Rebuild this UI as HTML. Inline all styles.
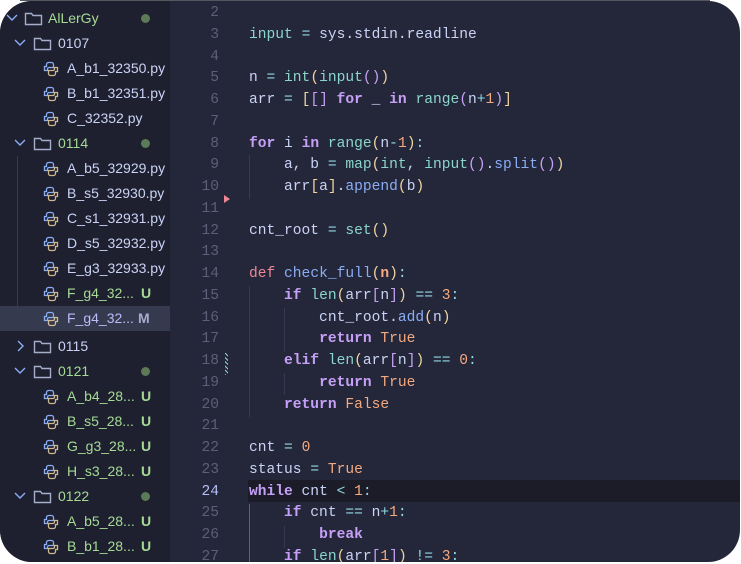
<!DOCTYPE html>
<html><head><meta charset="utf-8"><style>
*{margin:0;padding:0;box-sizing:border-box}
body{width:741px;height:564px;background:#fff;position:relative;overflow:hidden;font-family:"Liberation Sans",sans-serif}
.topline{position:absolute;left:20px;top:0;width:690px;height:1px;background:#55575f}
.card{position:absolute;left:0;top:1px;width:740px;height:561px;border-radius:32px;overflow:hidden;background:#24273a}
.side{position:absolute;left:0;top:0;width:170px;height:100%;background:#1e2030}
.row{position:absolute;left:0;width:170px;height:25px;font-size:14px;line-height:25px;color:#cad3f5}
.row.sel{background:#363a4f}
.row span.t{position:absolute;top:0}
.chev{position:absolute;top:7px}
.fold{position:absolute;top:5px}
.py{position:absolute;top:5px;left:43px}
.dot{position:absolute;left:141px;top:8px;width:9px;height:9px;border-radius:50%;background:#5b7a55}
.badge{position:absolute;left:141px;top:0;font-weight:bold;font-size:14px}
.g{color:#a6da95}
.guide{position:absolute;left:17px;width:1px;background:#363a4f}
.code{position:absolute;left:0;top:2px;width:100%;font-family:"Liberation Mono",monospace;font-size:14.6px}
.ln{position:absolute;left:170px;width:49px;text-align:right;color:#5b6078;height:21.76px;line-height:21.76px}
.ln.cur{color:#b7bdf8}
.cl{position:absolute;left:249px;white-space:pre;color:#cad3f5;height:21.76px;line-height:21.76px}
.hl{position:absolute;left:248px;width:500px;height:22px;background:#1b1c28}
.k{color:#c6a0f6;font-weight:bold}.f{color:#8aadf4}.b{color:#8bd5ca}.o{color:#91d7e3}.n{color:#f5a97f}.d{color:#ed8796}.p{color:#eed49f}.pp{color:#c6a0f6}.nb{color:#f5a97f;font-weight:bold}
.ig{position:absolute;width:1px;background:#363a4f}
</style></head><body>
<div class="topline"></div>
<div class="card">
<div class="side">
<div class="guide" style="top:155px;height:175px"></div>
<div class="row" style="top:5px"><svg class="chev" style="left:6px" width="12" height="10" viewBox="0 0 12 10"><path d="M1 2l5 5 5-5" fill="none" stroke="#8aadf4" stroke-width="1.4"/></svg><svg class="fold" style="left:24px" width="19" height="15" viewBox="0 0 19 15"><path d="M1.5 2.5h6l1.5 2h8.5v9h-16z" fill="none" stroke="#a5adcb" stroke-width="1.4"/></svg><span class="t g" style="left:48px">AlLerGy</span><div class="dot"></div></div>
<div class="row" style="top:30px"><svg class="chev" style="left:14px" width="12" height="10" viewBox="0 0 12 10"><path d="M1 2l5 5 5-5" fill="none" stroke="#8aadf4" stroke-width="1.4"/></svg><svg class="fold" style="left:33px" width="19" height="15" viewBox="0 0 19 15"><path d="M1.5 2.5h6l1.5 2h8.5v9h-16z" fill="none" stroke="#a5adcb" stroke-width="1.4"/></svg><span class="t" style="left:58px">0107</span></div>
<div class="row" style="top:55px"><svg class="py" width="16" height="16" viewBox="0 0 16 16"><path d="M8 1.5H5.5a2 2 0 0 0-2 2v2H1.5v4h3V8a1.5 1.5 0 0 1 1.5-1.5h4.5V3.5A2 2 0 0 0 8.5 1.5z" fill="none" stroke="#8aadf4" stroke-width="1.3"/><path d="M8 14.5h2.5a2 2 0 0 0 2-2v-2h2v-4h-3V8a1.5 1.5 0 0 1-1.5 1.5H5.5v3a2 2 0 0 0 2 2z" fill="none" stroke="#eed49f" stroke-width="1.3" opacity=".85"/></svg><span class="t" style="left:67px">A_b1_32350.py</span></div>
<div class="row" style="top:80px"><svg class="py" width="16" height="16" viewBox="0 0 16 16"><path d="M8 1.5H5.5a2 2 0 0 0-2 2v2H1.5v4h3V8a1.5 1.5 0 0 1 1.5-1.5h4.5V3.5A2 2 0 0 0 8.5 1.5z" fill="none" stroke="#8aadf4" stroke-width="1.3"/><path d="M8 14.5h2.5a2 2 0 0 0 2-2v-2h2v-4h-3V8a1.5 1.5 0 0 1-1.5 1.5H5.5v3a2 2 0 0 0 2 2z" fill="none" stroke="#eed49f" stroke-width="1.3" opacity=".85"/></svg><span class="t" style="left:67px">B_b1_32351.py</span></div>
<div class="row" style="top:105px"><svg class="py" width="16" height="16" viewBox="0 0 16 16"><path d="M8 1.5H5.5a2 2 0 0 0-2 2v2H1.5v4h3V8a1.5 1.5 0 0 1 1.5-1.5h4.5V3.5A2 2 0 0 0 8.5 1.5z" fill="none" stroke="#8aadf4" stroke-width="1.3"/><path d="M8 14.5h2.5a2 2 0 0 0 2-2v-2h2v-4h-3V8a1.5 1.5 0 0 1-1.5 1.5H5.5v3a2 2 0 0 0 2 2z" fill="none" stroke="#eed49f" stroke-width="1.3" opacity=".85"/></svg><span class="t" style="left:67px">C_32352.py</span></div>
<div class="row" style="top:130px"><svg class="chev" style="left:14px" width="12" height="10" viewBox="0 0 12 10"><path d="M1 2l5 5 5-5" fill="none" stroke="#8aadf4" stroke-width="1.4"/></svg><svg class="fold" style="left:33px" width="19" height="15" viewBox="0 0 19 15"><path d="M1.5 2.5h6l1.5 2h8.5v9h-16z" fill="none" stroke="#a5adcb" stroke-width="1.4"/></svg><span class="t g" style="left:58px">0114</span><div class="dot"></div></div>
<div class="row" style="top:155px"><svg class="py" width="16" height="16" viewBox="0 0 16 16"><path d="M8 1.5H5.5a2 2 0 0 0-2 2v2H1.5v4h3V8a1.5 1.5 0 0 1 1.5-1.5h4.5V3.5A2 2 0 0 0 8.5 1.5z" fill="none" stroke="#8aadf4" stroke-width="1.3"/><path d="M8 14.5h2.5a2 2 0 0 0 2-2v-2h2v-4h-3V8a1.5 1.5 0 0 1-1.5 1.5H5.5v3a2 2 0 0 0 2 2z" fill="none" stroke="#eed49f" stroke-width="1.3" opacity=".85"/></svg><span class="t" style="left:67px">A_b5_32929.py</span></div>
<div class="row" style="top:180px"><svg class="py" width="16" height="16" viewBox="0 0 16 16"><path d="M8 1.5H5.5a2 2 0 0 0-2 2v2H1.5v4h3V8a1.5 1.5 0 0 1 1.5-1.5h4.5V3.5A2 2 0 0 0 8.5 1.5z" fill="none" stroke="#8aadf4" stroke-width="1.3"/><path d="M8 14.5h2.5a2 2 0 0 0 2-2v-2h2v-4h-3V8a1.5 1.5 0 0 1-1.5 1.5H5.5v3a2 2 0 0 0 2 2z" fill="none" stroke="#eed49f" stroke-width="1.3" opacity=".85"/></svg><span class="t" style="left:67px">B_s5_32930.py</span></div>
<div class="row" style="top:205px"><svg class="py" width="16" height="16" viewBox="0 0 16 16"><path d="M8 1.5H5.5a2 2 0 0 0-2 2v2H1.5v4h3V8a1.5 1.5 0 0 1 1.5-1.5h4.5V3.5A2 2 0 0 0 8.5 1.5z" fill="none" stroke="#8aadf4" stroke-width="1.3"/><path d="M8 14.5h2.5a2 2 0 0 0 2-2v-2h2v-4h-3V8a1.5 1.5 0 0 1-1.5 1.5H5.5v3a2 2 0 0 0 2 2z" fill="none" stroke="#eed49f" stroke-width="1.3" opacity=".85"/></svg><span class="t" style="left:67px">C_s1_32931.py</span></div>
<div class="row" style="top:230px"><svg class="py" width="16" height="16" viewBox="0 0 16 16"><path d="M8 1.5H5.5a2 2 0 0 0-2 2v2H1.5v4h3V8a1.5 1.5 0 0 1 1.5-1.5h4.5V3.5A2 2 0 0 0 8.5 1.5z" fill="none" stroke="#8aadf4" stroke-width="1.3"/><path d="M8 14.5h2.5a2 2 0 0 0 2-2v-2h2v-4h-3V8a1.5 1.5 0 0 1-1.5 1.5H5.5v3a2 2 0 0 0 2 2z" fill="none" stroke="#eed49f" stroke-width="1.3" opacity=".85"/></svg><span class="t" style="left:67px">D_s5_32932.py</span></div>
<div class="row" style="top:255px"><svg class="py" width="16" height="16" viewBox="0 0 16 16"><path d="M8 1.5H5.5a2 2 0 0 0-2 2v2H1.5v4h3V8a1.5 1.5 0 0 1 1.5-1.5h4.5V3.5A2 2 0 0 0 8.5 1.5z" fill="none" stroke="#8aadf4" stroke-width="1.3"/><path d="M8 14.5h2.5a2 2 0 0 0 2-2v-2h2v-4h-3V8a1.5 1.5 0 0 1-1.5 1.5H5.5v3a2 2 0 0 0 2 2z" fill="none" stroke="#eed49f" stroke-width="1.3" opacity=".85"/></svg><span class="t" style="left:67px">E_g3_32933.py</span></div>
<div class="row" style="top:280px"><svg class="py" width="16" height="16" viewBox="0 0 16 16"><path d="M8 1.5H5.5a2 2 0 0 0-2 2v2H1.5v4h3V8a1.5 1.5 0 0 1 1.5-1.5h4.5V3.5A2 2 0 0 0 8.5 1.5z" fill="none" stroke="#8aadf4" stroke-width="1.3"/><path d="M8 14.5h2.5a2 2 0 0 0 2-2v-2h2v-4h-3V8a1.5 1.5 0 0 1-1.5 1.5H5.5v3a2 2 0 0 0 2 2z" fill="none" stroke="#eed49f" stroke-width="1.3" opacity=".85"/></svg><span class="t g" style="left:67px">F_g4_32...</span><span class="badge g">U</span></div>
<div class="row sel" style="top:305px"><svg class="py" width="16" height="16" viewBox="0 0 16 16"><path d="M8 1.5H5.5a2 2 0 0 0-2 2v2H1.5v4h3V8a1.5 1.5 0 0 1 1.5-1.5h4.5V3.5A2 2 0 0 0 8.5 1.5z" fill="none" stroke="#8aadf4" stroke-width="1.3"/><path d="M8 14.5h2.5a2 2 0 0 0 2-2v-2h2v-4h-3V8a1.5 1.5 0 0 1-1.5 1.5H5.5v3a2 2 0 0 0 2 2z" fill="none" stroke="#eed49f" stroke-width="1.3" opacity=".85"/></svg><span class="t" style="left:67px;color:#b7bdf8">F_g4_32...</span><span class="badge" style="left:138px;color:#a5adcb">M</span></div>
<div class="row" style="top:333px"><svg class="chev" style="left:16px;top:6px" width="10" height="12" viewBox="0 0 10 12"><path d="M2 1l5 5-5 5" fill="none" stroke="#8aadf4" stroke-width="1.4"/></svg><svg class="fold" style="left:33px" width="19" height="15" viewBox="0 0 19 15"><path d="M1.5 2.5h6l1.5 2h8.5v9h-16z" fill="none" stroke="#a5adcb" stroke-width="1.4"/></svg><span class="t" style="left:58px">0115</span></div>
<div class="row" style="top:358px"><svg class="chev" style="left:14px" width="12" height="10" viewBox="0 0 12 10"><path d="M1 2l5 5 5-5" fill="none" stroke="#8aadf4" stroke-width="1.4"/></svg><svg class="fold" style="left:33px" width="19" height="15" viewBox="0 0 19 15"><path d="M1.5 2.5h6l1.5 2h8.5v9h-16z" fill="none" stroke="#a5adcb" stroke-width="1.4"/></svg><span class="t g" style="left:58px">0121</span><div class="dot"></div></div>
<div class="row" style="top:383px"><svg class="py" width="16" height="16" viewBox="0 0 16 16"><path d="M8 1.5H5.5a2 2 0 0 0-2 2v2H1.5v4h3V8a1.5 1.5 0 0 1 1.5-1.5h4.5V3.5A2 2 0 0 0 8.5 1.5z" fill="none" stroke="#8aadf4" stroke-width="1.3"/><path d="M8 14.5h2.5a2 2 0 0 0 2-2v-2h2v-4h-3V8a1.5 1.5 0 0 1-1.5 1.5H5.5v3a2 2 0 0 0 2 2z" fill="none" stroke="#eed49f" stroke-width="1.3" opacity=".85"/></svg><span class="t g" style="left:67px">A_b4_28...</span><span class="badge g">U</span></div>
<div class="row" style="top:408px"><svg class="py" width="16" height="16" viewBox="0 0 16 16"><path d="M8 1.5H5.5a2 2 0 0 0-2 2v2H1.5v4h3V8a1.5 1.5 0 0 1 1.5-1.5h4.5V3.5A2 2 0 0 0 8.5 1.5z" fill="none" stroke="#8aadf4" stroke-width="1.3"/><path d="M8 14.5h2.5a2 2 0 0 0 2-2v-2h2v-4h-3V8a1.5 1.5 0 0 1-1.5 1.5H5.5v3a2 2 0 0 0 2 2z" fill="none" stroke="#eed49f" stroke-width="1.3" opacity=".85"/></svg><span class="t g" style="left:67px">B_s5_28...</span><span class="badge g">U</span></div>
<div class="row" style="top:433px"><svg class="py" width="16" height="16" viewBox="0 0 16 16"><path d="M8 1.5H5.5a2 2 0 0 0-2 2v2H1.5v4h3V8a1.5 1.5 0 0 1 1.5-1.5h4.5V3.5A2 2 0 0 0 8.5 1.5z" fill="none" stroke="#8aadf4" stroke-width="1.3"/><path d="M8 14.5h2.5a2 2 0 0 0 2-2v-2h2v-4h-3V8a1.5 1.5 0 0 1-1.5 1.5H5.5v3a2 2 0 0 0 2 2z" fill="none" stroke="#eed49f" stroke-width="1.3" opacity=".85"/></svg><span class="t g" style="left:67px">G_g3_28...</span><span class="badge g">U</span></div>
<div class="row" style="top:458px"><svg class="py" width="16" height="16" viewBox="0 0 16 16"><path d="M8 1.5H5.5a2 2 0 0 0-2 2v2H1.5v4h3V8a1.5 1.5 0 0 1 1.5-1.5h4.5V3.5A2 2 0 0 0 8.5 1.5z" fill="none" stroke="#8aadf4" stroke-width="1.3"/><path d="M8 14.5h2.5a2 2 0 0 0 2-2v-2h2v-4h-3V8a1.5 1.5 0 0 1-1.5 1.5H5.5v3a2 2 0 0 0 2 2z" fill="none" stroke="#eed49f" stroke-width="1.3" opacity=".85"/></svg><span class="t g" style="left:67px">H_s3_28...</span><span class="badge g">U</span></div>
<div class="row" style="top:483px"><svg class="chev" style="left:14px" width="12" height="10" viewBox="0 0 12 10"><path d="M1 2l5 5 5-5" fill="none" stroke="#8aadf4" stroke-width="1.4"/></svg><svg class="fold" style="left:33px" width="19" height="15" viewBox="0 0 19 15"><path d="M1.5 2.5h6l1.5 2h8.5v9h-16z" fill="none" stroke="#a5adcb" stroke-width="1.4"/></svg><span class="t g" style="left:58px">0122</span><div class="dot"></div></div>
<div class="row" style="top:508px"><svg class="py" width="16" height="16" viewBox="0 0 16 16"><path d="M8 1.5H5.5a2 2 0 0 0-2 2v2H1.5v4h3V8a1.5 1.5 0 0 1 1.5-1.5h4.5V3.5A2 2 0 0 0 8.5 1.5z" fill="none" stroke="#8aadf4" stroke-width="1.3"/><path d="M8 14.5h2.5a2 2 0 0 0 2-2v-2h2v-4h-3V8a1.5 1.5 0 0 1-1.5 1.5H5.5v3a2 2 0 0 0 2 2z" fill="none" stroke="#eed49f" stroke-width="1.3" opacity=".85"/></svg><span class="t g" style="left:67px">A_b5_28...</span><span class="badge g">U</span></div>
<div class="row" style="top:533px"><svg class="py" width="16" height="16" viewBox="0 0 16 16"><path d="M8 1.5H5.5a2 2 0 0 0-2 2v2H1.5v4h3V8a1.5 1.5 0 0 1 1.5-1.5h4.5V3.5A2 2 0 0 0 8.5 1.5z" fill="none" stroke="#8aadf4" stroke-width="1.3"/><path d="M8 14.5h2.5a2 2 0 0 0 2-2v-2h2v-4h-3V8a1.5 1.5 0 0 1-1.5 1.5H5.5v3a2 2 0 0 0 2 2z" fill="none" stroke="#eed49f" stroke-width="1.3" opacity=".85"/></svg><span class="t g" style="left:67px">B_b1_28...</span><span class="badge g">U</span></div>
</div>

<div class="code">
<div class="hl" style="top:477px"></div>
<div class="ig" style="left:249px;top:152px;height:44px"></div>
<div class="ig" style="left:249px;top:283px;height:131px"></div>
<div class="ig" style="left:284px;top:305px;height:44px"></div>
<div class="ig" style="left:284px;top:370px;height:22px"></div>
<div class="ig" style="left:249px;top:501px;height:60px;background:#5b6078"></div>
<div class="ig" style="left:284px;top:523px;height:22px"></div>
<svg style="position:absolute;left:224px;top:192px" width="6" height="8"><path d="M0 0l6 4-6 4z" fill="#ed8796"/></svg>
<div style="position:absolute;left:225px;top:350px;width:3px;height:22px;background:repeating-linear-gradient(45deg,#8bd5ca 0 1px,transparent 1px 3px)"></div>

<div class="ln" style="top:0">2</div>
<div class="ln" style="top:21.76px">3</div><div class="cl" style="top:21.76px"><span class="b">input</span> <span class="o">=</span> sys.stdin.readline</div>
<div class="ln" style="top:43.52px">4</div>
<div class="ln" style="top:65.28px">5</div><div class="cl" style="top:65.28px">n <span class="o">=</span> <span class="b">int</span><span class="p">(</span><span class="b">input</span><span class="pp">()</span><span class="p">)</span></div>
<div class="ln" style="top:87.04px">6</div><div class="cl" style="top:87.04px">arr <span class="o">=</span> <span class="p">[</span><span class="pp">[]</span> <span class="k">for</span> _ <span class="k">in</span> <span class="b">range</span><span class="pp">(</span>n<span class="o">+</span><span class="n">1</span><span class="pp">)</span><span class="p">]</span></div>
<div class="ln" style="top:108.8px">7</div>
<div class="ln" style="top:130.56px">8</div><div class="cl" style="top:130.56px"><span class="k">for</span> i <span class="k">in</span> <span class="b">range</span><span class="p">(</span>n<span class="o">-</span><span class="n">1</span><span class="p">)</span><span class="o">:</span></div>
<div class="ln" style="top:152.32px">9</div><div class="cl" style="top:152.32px">    a, b <span class="o">=</span> <span class="b">map</span><span class="p">(</span><span class="b">int</span>, <span class="b">input</span><span class="pp">()</span>.<span class="f">split</span><span class="pp">()</span><span class="p">)</span></div>
<div class="ln" style="top:174.08px">10</div><div class="cl" style="top:174.08px">    arr<span class="p">[</span>a<span class="p">]</span>.<span class="f">append</span><span class="p">(</span>b<span class="p">)</span></div>
<div class="ln" style="top:195.84px">11</div>
<div class="ln" style="top:217.6px">12</div><div class="cl" style="top:217.6px">cnt_root <span class="o">=</span> <span class="b">set</span><span class="p">()</span></div>
<div class="ln" style="top:239.36px">13</div>
<div class="ln" style="top:261.12px">14</div><div class="cl" style="top:261.12px"><span class="d">def</span> <span class="f">check_full</span><span class="p">(</span><span class="nb">n</span><span class="p">)</span><span class="o">:</span></div>
<div class="ln" style="top:282.88px">15</div><div class="cl" style="top:282.88px">    <span class="k">if</span> <span class="b">len</span><span class="p">(</span>arr<span class="pp">[</span>n<span class="pp">]</span><span class="p">)</span> <span class="o">==</span> <span class="n">3</span><span class="o">:</span></div>
<div class="ln" style="top:304.64px">16</div><div class="cl" style="top:304.64px">        cnt_root.<span class="f">add</span><span class="p">(</span>n<span class="p">)</span></div>
<div class="ln" style="top:326.4px">17</div><div class="cl" style="top:326.4px">        <span class="k">return</span> <span class="n">True</span></div>
<div class="ln" style="top:348.16px">18</div><div class="cl" style="top:348.16px">    <span class="k">elif</span> <span class="b">len</span><span class="p">(</span>arr<span class="pp">[</span>n<span class="pp">]</span><span class="p">)</span> <span class="o">==</span> <span class="n">0</span><span class="o">:</span></div>
<div class="ln" style="top:369.92px">19</div><div class="cl" style="top:369.92px">        <span class="k">return</span> <span class="n">True</span></div>
<div class="ln" style="top:391.68px">20</div><div class="cl" style="top:391.68px">    <span class="k">return</span> <span class="n">False</span></div>
<div class="ln" style="top:413.44px">21</div>
<div class="ln" style="top:435.2px">22</div><div class="cl" style="top:435.2px">cnt <span class="o">=</span> <span class="n">0</span></div>
<div class="ln" style="top:456.96px">23</div><div class="cl" style="top:456.96px">status <span class="o">=</span> <span class="n">True</span></div>
<div class="ln cur" style="top:478.72px">24</div><div class="cl" style="top:478.72px"><span class="k">while</span> cnt <span class="o">&lt;</span> <span class="n">1</span><span class="o">:</span></div>
<div class="ln" style="top:500.48px">25</div><div class="cl" style="top:500.48px">    <span class="k">if</span> cnt <span class="o">==</span> n<span class="o">+</span><span class="n">1</span><span class="o">:</span></div>
<div class="ln" style="top:522.24px">26</div><div class="cl" style="top:522.24px">        <span class="k">break</span></div>
<div class="ln" style="top:544px">27</div><div class="cl" style="top:544px">    <span class="k">if</span> <span class="b">len</span><span class="p">(</span>arr<span class="pp">[</span><span class="n">1</span><span class="pp">]</span><span class="p">)</span> <span class="o">!=</span> <span class="n">3</span><span class="o">:</span></div>
</div>
</div>
</body></html>
